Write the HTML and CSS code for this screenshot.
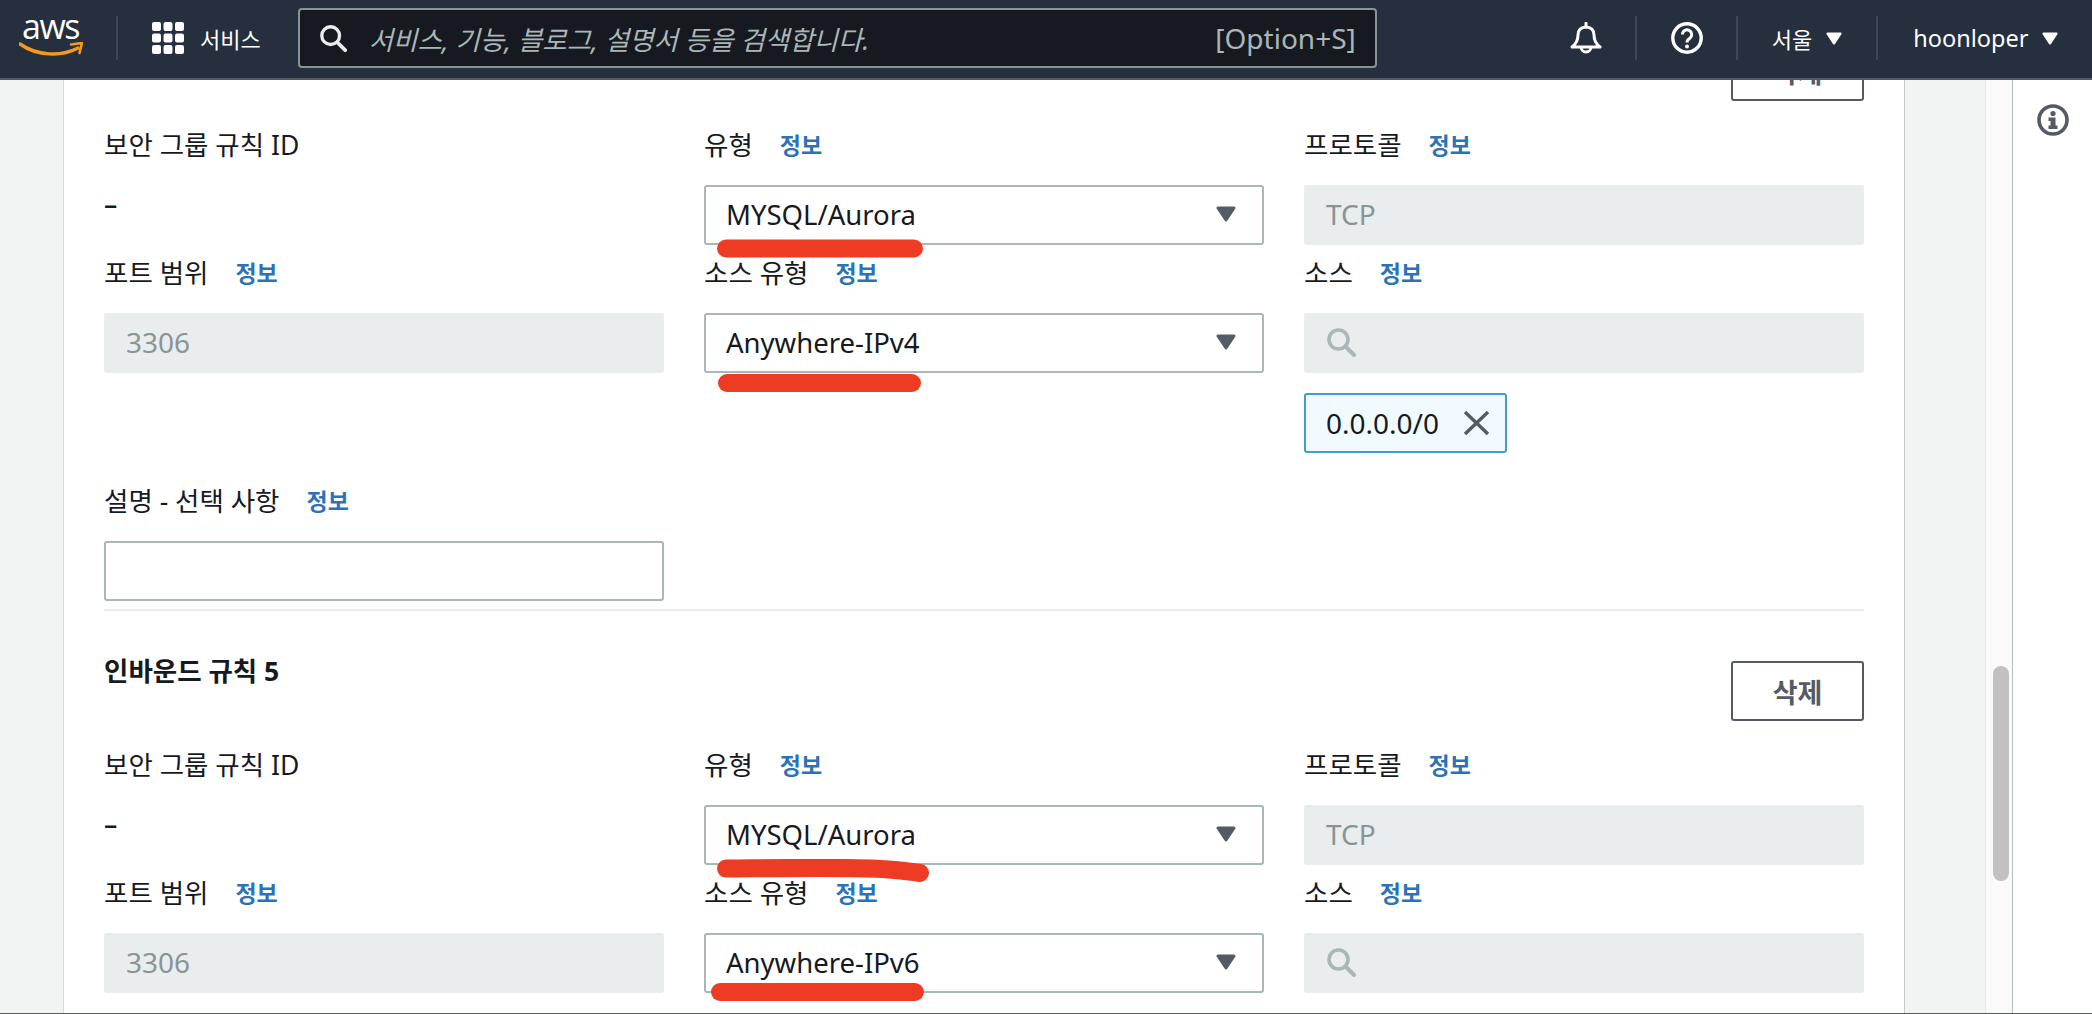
FILE: index.html
```html
<!DOCTYPE html>
<html lang="ko">
<head>
    <meta charset="UTF-8">
    <title>인바운드 규칙 편집</title>
    <link rel="stylesheet" href="styles.css">
</head>
<body>
    <svg class="defs" aria-hidden="true">
        <symbol id="icon-caret" viewBox="0 0 20 16">
            <path d="M2 2H18L10 14Z" fill="currentColor" stroke="currentColor" stroke-width="3" stroke-linejoin="round"/>
        </symbol>
        <symbol id="icon-search" viewBox="0 0 30 30">
            <circle cx="12.5" cy="12.5" r="9.5" fill="none" stroke="currentColor" stroke-width="3.6"/>
            <path d="M19.5 19.5L28 28" fill="none" stroke="currentColor" stroke-width="4" stroke-linecap="round"/>
        </symbol>
    </svg>

    <!-- Top navigation -->
    <header class="nav">
        <div class="logo">
            <span class="logo-text">aws</span>
            <svg class="logo-smile" viewBox="0 0 64 16">
                <path d="M1 2C18 14 42 15 59 6" fill="none" stroke="#f7991c" stroke-width="3.4" stroke-linecap="round"/>
                <path d="M52 2.5L63 1L60.500 11" fill="none" stroke="#f7991c" stroke-width="2.600" stroke-linecap="round" stroke-linejoin="round"/>
            </svg>
        </div>
        <span class="nav-divider nav-divider-logo"></span>
        <div class="services">
            <svg class="services-icon" viewBox="0 0 32 32" fill="#fff">
                <rect x="0" y="0" width="9" height="9" rx="2"/><rect x="11.500" y="0" width="9" height="9" rx="2"/><rect x="23" y="0" width="9" height="9" rx="2"/>
                <rect x="0" y="11.500" width="9" height="9" rx="2"/><rect x="11.500" y="11.500" width="9" height="9" rx="2"/><rect x="23" y="11.500" width="9" height="9" rx="2"/>
                <rect x="0" y="23" width="9" height="9" rx="2"/><rect x="11.500" y="23" width="9" height="9" rx="2"/><rect x="23" y="23" width="9" height="9" rx="2"/>
            </svg>
            <span>서비스</span>
        </div>
        <div class="search">
            <svg class="search-icon"><use href="#icon-search"/></svg>
            <span class="search-text">서비스, 기능, 블로그, 설명서 등을 검색합니다.</span>
            <span class="search-key">[Option+S]</span>
        </div>
        <div class="nav-right">
            <svg class="nav-icon nav-icon-bell" viewBox="0 0 32 32" fill="none" stroke="#fff" stroke-width="3">
                <path d="M2 25C6 22 8 18 8 13C8 8 11 5 16 5C21 5 24 8 24 13C24 18 26 22 30 25Z" stroke-linejoin="round"/>
                <path d="M11 25A5 5 0 0 0 21 25"/>
                <path d="M16 1V5" stroke-linecap="round"/>
            </svg>
            <span class="nav-divider nav-divider-bell"></span>
            <svg class="nav-icon nav-icon-help" viewBox="0 0 32 32" fill="none" stroke="#fff" stroke-width="3.400">
                <circle cx="16" cy="16" r="14.200"/>
                <path d="M11.500 12.500A4.600 4.600 0 1 1 18.800 16.200C17 17.400 16 18.200 16 20.500" stroke-width="3"/>
                <circle cx="16" cy="24.500" r="2" fill="#fff" stroke="none"/>
            </svg>
            <span class="nav-divider nav-divider-help"></span>
            <span class="nav-menu nav-menu-region">서울 <svg class="nav-caret"><use href="#icon-caret"/></svg></span>
            <span class="nav-divider nav-divider-region"></span>
            <span class="nav-menu nav-menu-user">hoonloper <svg class="nav-caret"><use href="#icon-caret"/></svg></span>
        </div>
    </header>

    <div class="page">
        <div class="gutter-left"></div>

        <main class="panel">
            <section class="rule rule-top">
                <div class="rule-head">
                    <button class="btn-delete">삭제</button>
                </div>
                <div class="rule-grid">
                    <div class="field">
                        <div class="label">보안 그룹 규칙 ID</div>
                        <div class="value-dash">–</div>
                    </div>
                    <div class="field">
                        <div class="label">유형 <a class="info">정보</a></div>
                        <div class="select">MYSQL/Aurora <svg class="select-caret"><use href="#icon-caret"/></svg></div>
                        <svg class="mark mark-type-1" viewBox="0 0 206 19"><path d="M9 9.500H197" stroke="#ee3b24" stroke-width="18" stroke-linecap="round" fill="none"/></svg>
                    </div>
                    <div class="field">
                        <div class="label">프로토콜 <a class="info">정보</a></div>
                        <div class="input disabled">TCP</div>
                    </div>
                    <div class="field">
                        <div class="label">포트 범위 <a class="info">정보</a></div>
                        <div class="input disabled">3306</div>
                    </div>
                    <div class="field">
                        <div class="label">소스 유형 <a class="info">정보</a></div>
                        <div class="select">Anywhere-IPv4 <svg class="select-caret"><use href="#icon-caret"/></svg></div>
                        <svg class="mark mark-source-1" viewBox="0 0 203 20"><path d="M9 10H194" stroke="#ee3b24" stroke-width="18" stroke-linecap="round" fill="none"/></svg>
                    </div>
                    <div class="field">
                        <div class="label">소스 <a class="info">정보</a></div>
                        <div class="input disabled"><svg class="input-search"><use href="#icon-search"/></svg></div>
                        <div class="tag">
                            <span>0.0.0.0/0</span>
                            <svg class="tag-close" viewBox="0 0 27 26"><path d="M2 2L25 24M25 2L2 24" stroke="#545b64" stroke-width="3.400" fill="none"/></svg>
                        </div>
                    </div>
                    <div class="field">
                        <div class="label">설명 - 선택 사항 <a class="info">정보</a></div>
                        <div class="input"></div>
                    </div>
                </div>
            </section>

            <section class="rule">
                <div class="rule-head">
                    <h3>인바운드 규칙 5</h3>
                    <button class="btn-delete">삭제</button>
                </div>
                <div class="rule-grid">
                    <div class="field">
                        <div class="label">보안 그룹 규칙 ID</div>
                        <div class="value-dash">–</div>
                    </div>
                    <div class="field">
                        <div class="label">유형 <a class="info">정보</a></div>
                        <div class="select">MYSQL/Aurora <svg class="select-caret"><use href="#icon-caret"/></svg></div>
                        <svg class="mark mark-type-2" viewBox="0 0 212 23"><path d="M9 9.500C70 9 140 8 165 10C185 11 195 13 203 14" stroke="#ee3b24" stroke-width="18" stroke-linecap="round" fill="none"/></svg>
                    </div>
                    <div class="field">
                        <div class="label">프로토콜 <a class="info">정보</a></div>
                        <div class="input disabled">TCP</div>
                    </div>
                    <div class="field">
                        <div class="label">포트 범위 <a class="info">정보</a></div>
                        <div class="input disabled">3306</div>
                    </div>
                    <div class="field">
                        <div class="label">소스 유형 <a class="info">정보</a></div>
                        <div class="select">Anywhere-IPv6 <svg class="select-caret"><use href="#icon-caret"/></svg></div>
                        <svg class="mark mark-source-2" viewBox="0 0 213 20"><path d="M9 10H204" stroke="#ee3b24" stroke-width="18" stroke-linecap="round" fill="none"/></svg>
                    </div>
                    <div class="field">
                        <div class="label">소스 <a class="info">정보</a></div>
                        <div class="input disabled"><svg class="input-search"><use href="#icon-search"/></svg></div>
                    </div>
                </div>
            </section>
        </main>

        <div class="gutter-right"></div>
        <div class="scroll-track"><div class="scroll-thumb"></div></div>

        <aside class="tools">
            <svg class="tools-info" viewBox="0 0 32 32">
                <circle cx="16" cy="16" r="14" fill="none" stroke="#545b64" stroke-width="3.600"/>
                <circle cx="16" cy="9.500" r="2.600" fill="#545b64"/>
                <path d="M11.500 13.500H18.500V21.500H20.500V25H11.500V21.500H13.500V17H11.500Z" fill="#545b64"/>
            </svg>
        </aside>
    </div>
</body>
</html>
```

FILE: styles.css
```css
* {
    box-sizing: border-box;
}
body {
    margin: 0;
    height: 1014px;
    overflow: hidden;
    display: flex;
    flex-direction: column;
    font-family: "Noto Sans", "Noto Sans CJK KR", sans-serif;
    font-size: 26.5px;
    color: #16191f;
    background-color: #fff;
}
.defs {
    display: none;
}

/* Top navigation */
.nav {
    flex: none;
    position: relative;
    z-index: 2;
    display: flex;
    align-items: center;
    height: 80px;
    padding-bottom: 2px;
    background-color: #252f3e;
    border-bottom: 2px solid #545b64;
    color: #fff;
}
.logo {
    position: relative;
    width: 64px;
    height: 40px;
    margin-left: 19px;
}
.logo-text {
    position: absolute;
    left: 3px;
    top: -16px;
    font-family: "Open Sans", sans-serif;
    font-size: 34px;
    line-height: 48px;
    letter-spacing: -1.5px;
}
.logo-smile {
    position: absolute;
    left: 0;
    top: 24px;
    width: 64px;
    height: 16px;
}
.nav-divider {
    width: 2px;
    height: 44px;
    background-color: #414750;
}
.nav-divider-logo {
    margin-left: 33px;
}
.services {
    display: flex;
    align-items: center;
    gap: 16px;
    margin-left: 34px;
    font-size: 22px;
}
.services-icon {
    width: 32px;
    height: 32px;
}
.search {
    display: flex;
    align-items: center;
    width: 1079px;
    height: 60px;
    margin-left: 37px;
    padding: 0 19px 0 19px;
    background-color: #16191f;
    border: 2px solid #879596;
    border-radius: 4px;
}
.search-icon {
    width: 28px;
    height: 28px;
    color: #eaeded;
}
.search-text {
    margin-left: 22px;
    font-size: 26.5px;
    font-style: italic;
    color: #aab7b8;
}
.search-key {
    margin-left: auto;
    font-size: 28px;
    color: #aab7b8;
}
.nav-right {
    display: flex;
    align-items: center;
    margin-left: 193px;
}
.nav-icon {
    width: 32px;
    height: 32px;
}
.nav-divider-bell {
    margin: 0 34px 0 33px;
}
.nav-divider-help {
    margin: 0 34px 0 33px;
}
.nav-menu {
    display: flex;
    align-items: center;
    gap: 14px;
    font-size: 22px;
}
.nav-menu-user {
    font-size: 23.5px;
}
.nav-caret {
    width: 16px;
    height: 13px;
}
.nav-divider-region {
    margin: 0 35px 0 34px;
}

/* Page columns */
.page {
    flex: 1;
    display: flex;
    min-height: 0;
    overflow: hidden;
    border-bottom: 1px solid #545b64;
}
.gutter-left {
    flex: none;
    width: 64px;
    background-color: #f2f3f3;
    border-right: 1px solid #d5dbdb;
}
.panel {
    flex: none;
    width: 1840px;
    padding: 0 40px;
}
.gutter-right {
    flex: none;
    width: 81px;
    background-color: #f2f3f3;
    border-left: 1px solid #c4cbcb;
}
.scroll-track {
    flex: none;
    width: 28px;
    padding: 586px 5px 0 7px;
    background-color: #fafafa;
    border-left: 1px solid #e8e8e8;
    border-right: 1px solid #b5bdbd;
}
.scroll-thumb {
    width: 16px;
    height: 215px;
    background-color: #c1c1c1;
    border-radius: 8px;
}
.tools {
    flex: 1;
    display: flex;
    justify-content: center;
    padding-top: 24px;
}
.tools-info {
    width: 32px;
    height: 32px;
}

/* Rule blocks */
.rule-top {
    margin-top: -39px;
    padding-bottom: 8px;
    border-bottom: 2px solid #eaeded;
}
.rule-top + .rule {
    margin-top: 50px;
}
.rule-head {
    display: flex;
    align-items: flex-start;
    height: 60px;
    margin-bottom: 24px;
}
.rule-head h3 {
    margin: 0;
    font-size: 26.5px;
    font-weight: 700;
    line-height: 20px;
}
.btn-delete {
    width: 133px;
    height: 60px;
    margin-left: auto;
    padding: 0;
    font-family: inherit;
    font-size: 27px;
    font-weight: 700;
    color: #545b64;
    background-color: #fff;
    border: 2px solid #545b64;
    border-radius: 3px;
}
.rule-grid {
    display: grid;
    grid-template-columns: 560px 560px 560px;
    column-gap: 40px;
    row-gap: 8px;
}
.field {
    position: relative;
}
.label {
    display: flex;
    align-items: center;
    gap: 7px;
    height: 40px;
    margin-bottom: 20px;
    padding-bottom: 3px;
}
.info {
    margin-left: 20px;
    font-size: 23px;
    font-weight: 700;
    color: #2b72b8;
}
.value-dash {
    height: 40px;
    line-height: 38px;
    font-weight: 500;
}
.select,
.input {
    display: flex;
    align-items: center;
    height: 60px;
    padding: 0 20px 2px;
    font-size: 27.5px;
    background-color: #fff;
    border: 2px solid #aab7b8;
    border-radius: 3px;
}
.select-caret {
    width: 20px;
    height: 16px;
    margin-left: auto;
    margin-right: 6px;
    color: #545b64;
}
.input.disabled {
    font-size: 28px;
    color: #879596;
    background-color: #eaeded;
    border-color: #eaeded;
}
.input-search {
    width: 30px;
    height: 30px;
    color: #aab7b8;
}
.tag {
    display: flex;
    align-items: center;
    gap: 24px;
    width: 203px;
    height: 60px;
    margin: 20px 0;
    padding: 0 10px 0 20px;
    font-size: 28px;
    background-color: #f1faff;
    border: 2px solid #3f9fc9;
    border-radius: 3px;
}
.tag-close {
    flex: none;
    width: 27px;
    height: 26px;
}

/* Red hand drawn marks over the fields */
.mark {
    position: absolute;
    left: 13px;
    filter: blur(0.6px);
}
.mark-type-1 {
    top: 114px;
    width: 206px;
    height: 19px;
}
.mark-source-1 {
    left: 14px;
    top: 120px;
    width: 203px;
    height: 20px;
}
.mark-type-2 {
    top: 114px;
    width: 212px;
    height: 23px;
}
.mark-source-2 {
    left: 7px;
    top: 109px;
    width: 213px;
    height: 20px;
}
```
